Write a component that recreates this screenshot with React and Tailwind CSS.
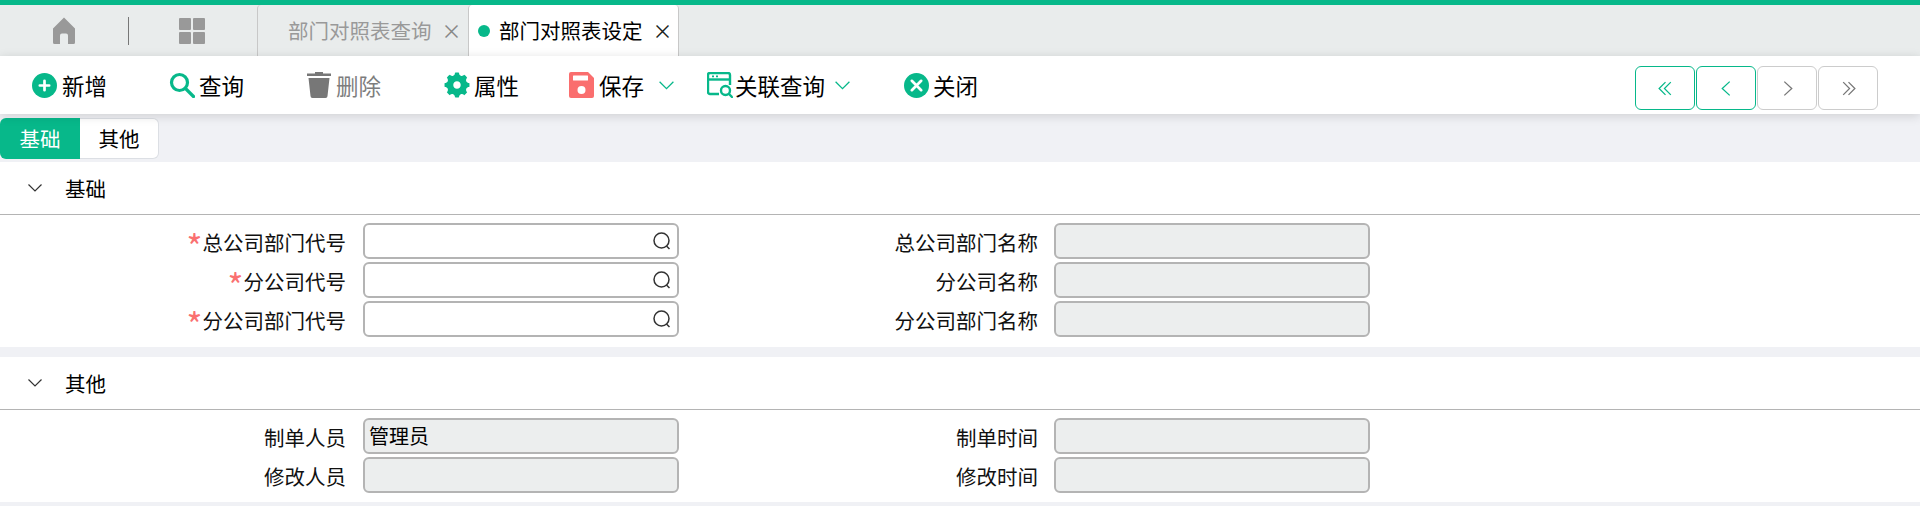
import React from "react";
import { RiSettings5Fill } from "react-icons/ri";

const font = "font-['Noto_Sans_CJK_SC','Noto_Sans',sans-serif]";

const Chevron = ({ className = "", dir = "down" }) => (
  <svg viewBox="0 0 16 16" className={className} fill="none" stroke="currentColor" strokeWidth="1.2">
    {dir === "down" && <path d="M1.5 4.5 8 11l6.5-6.5" />}
    {dir === "left" && <path d="M11 1.5 4 8l7 6.5" />}
    {dir === "right" && <path d="M5 1.5 12 8l-7 6.5" />}
    {dir === "dleft" && <path d="M8 2 2 8l6 6M13 2 7 8l6 6" />}
    {dir === "dright" && <path d="M3 2l6 6-6 6M8 2l6 6-6 6" />}
  </svg>
);

const HomeIcon = () => (
  <svg viewBox="0 0 26 28" className="w-[26px] h-[28px]" fill="#999999">
    <path d="M13 0.5 24 11.5 V25.5 Q24 27 22.5 27 H17 V18.5 Q17 16.5 15 16.5 H11 Q9 16.5 9 18.5 V27 H3.5 Q2 27 2 25.5 V11.5 Z" />
  </svg>
);

const GridIcon = () => (
  <svg viewBox="0 0 26 26" className="w-[26px] h-[26px]" fill="#999999">
    <rect x="0" y="0" width="12" height="12" rx="1" />
    <rect x="14" y="0" width="12" height="12" rx="1" />
    <rect x="0" y="14" width="12" height="12" rx="1" />
    <rect x="14" y="14" width="12" height="12" rx="1" />
  </svg>
);

const PlusIcon = () => (
  <svg viewBox="0 0 24 24" className="w-[25px] h-[25px]">
    <circle cx="12" cy="12" r="12" fill="#07b88a" />
    <path d="M12 7.5v9M7.5 12h9" stroke="#fff" strokeWidth="2.6" strokeLinecap="round" />
  </svg>
);

const SearchIcon = () => (
  <svg viewBox="0 0 26 26" className="w-[26px] h-[26px] -mr-[1px]" fill="none" stroke="#07b88a" strokeWidth="3.2">
    <circle cx="10.5" cy="10.5" r="8" />
    <path d="M16.5 16.5 24.5 24.5" strokeLinecap="round" />
  </svg>
);

const TrashIcon = () => (
  <svg viewBox="0 0 24 26" className="w-[24px] h-[26px]" fill="#777777">
    <path d="M8 0h8v1.5h8V4H0V1.5h8z" />
    <path d="M1.5 6h21l-2 18a2 2 0 0 1-2 2h-13a2 2 0 0 1-2-2z" />
  </svg>
);

const SaveIcon = () => (
  <svg viewBox="0 0 25 26" className="w-[25px] h-[26px]">
    <path d="M2 0h17l6 6v18a2 2 0 0 1-2 2H2a2 2 0 0 1-2-2V2a2 2 0 0 1 2-2z" fill="#fa6e6e" />
    <rect x="4" y="3.5" width="15" height="5" rx="0.5" fill="#fff" />
    <circle cx="12.5" cy="18" r="4" fill="#fff" />
  </svg>
);

const LinkQueryIcon = () => (
  <svg viewBox="0 0 26 26" className="w-[26px] h-[26px] ml-[1px] -mr-[3px]" fill="none" stroke="#07b88a" strokeWidth="2.4">
    <path d="M12 22H3a2 2 0 0 1-2-2V3a2 2 0 0 1 2-2h18a2 2 0 0 1 2 2v10" />
    <path d="M1 7.5h22" />
    <path d="M5 4.3h2M9 4.3h2" strokeWidth="1.8" />
    <circle cx="18.5" cy="18.5" r="4.5" />
    <path d="M22 22l3 3" strokeLinecap="round" />
  </svg>
);

const CloseIcon = () => (
  <svg viewBox="0 0 24 24" className="w-[25px] h-[25px] -mr-[1px]">
    <circle cx="12" cy="12" r="12" fill="#07b88a" />
    <path d="M7.5 7.5l9 9M16.5 7.5l-9 9" stroke="#fff" strokeWidth="2.6" strokeLinecap="round" />
  </svg>
);

const Tool = ({ icon, label, width, gray, chevron }) => (
  <div className={`flex items-center ${width}`}>
    {icon}
    <span className={`ml-[5px] text-[22.5px] leading-none ${gray ? "text-[#7d7d7d]" : "text-black"}`}>{label}</span>
    {chevron && <Chevron className={`${chevron} w-[17px] h-[17px] text-[#07b88a]`} />}
  </div>
);

const PageBtn = ({ dir, active }) => (
  <div
    className={`w-[60px] h-[44px] flex items-center justify-center rounded-[6px] border ${
      active ? "border-[#07b88a] text-[#07b88a]" : "border-[#cccccc] text-[#777777]"
    }`}
  >
    <Chevron dir={dir} className="w-[17px] h-[17px]" />
  </div>
);

const Field = ({ label, required, search, value, disabled, wide }) => (
  <>
    <div className={`${wide ? "w-[359px]" : "w-[346px]"} flex justify-end items-center pt-[3px] text-[20.5px] leading-none text-[#111111]`}>
      {required && <span className="text-[#fa7070] text-[34px] leading-none h-[20px] mt-[-8px]">*</span>}
      {label}
    </div>
    <div
      className={`${wide ? "ml-[16px]" : "ml-[17px]"} w-[316px] h-[36px] rounded-[6px] border-2 border-[#b4b4b4] flex items-center justify-between pl-[4px] pr-[5px] text-[20px] text-black ${
        disabled ? "bg-[#eceeee]" : "bg-white"
      }`}
    >
      <span className="leading-none">{value}</span>
      {search && (
        <svg viewBox="0 0 20 20" className="w-[20px] h-[20px]" fill="none" stroke="#333333" strokeWidth="1.5">
          <circle cx="9.5" cy="9.5" r="7.5" />
          <path d="M14.5 15l3 3" />
        </svg>
      )}
    </div>
  </>
);

const Row = ({ children }) => <div className="flex h-[36px]">{children}</div>;

const Section = ({ title, className, children }) => (
  <section className={`bg-white ${className}`}>
    <div className="h-[53px] flex items-center border-b border-[#b4b4b4] text-[20.5px] text-black">
      <Chevron className="ml-[27px] w-[16px] h-[16px] text-[#333333]" />
      <span className="ml-[22px] leading-none">{title}</span>
    </div>
    <div className="pt-[8px] flex flex-col gap-[3px]">{children}</div>
  </section>
);

export default function App() {
  return (
    <div className={`${font} w-[1920px] h-[506px] bg-[#f0f1f5] overflow-hidden`}>
      <div className="h-[5px] bg-[#07b88a]" />

      {/* tab bar */}
      <div className="h-[51px] bg-[#e9ecec] flex items-stretch">
        <div className="w-[257px] relative flex items-center">
          <div className="ml-[51px]"><HomeIcon /></div>
          <div className="ml-[51px] w-[1px] h-[28px] bg-[#777777]" />
          <div className="ml-[50px]"><GridIcon /></div>
        </div>
        <div className="w-[211px] border-l border-[#c8c8c8] rounded-tl-[4px] flex items-center pl-[30px] text-[20.5px] text-[#999999]">
          <span className="leading-none">部门对照表查询</span>
          <span className="ml-[10px] text-[20px] leading-none text-[#888888]">×</span>
        </div>
        <div className="w-[211px] bg-white border-x border-[#c8c8c8] rounded-t-[4px] flex items-center pl-[9px] text-[20.5px] text-black">
          <span className="w-[12px] h-[12px] rounded-full bg-[#07b88a]" />
          <span className="ml-[9px] leading-none">部门对照表设定</span>
          <span className="ml-[10px] text-[20px] leading-none text-[#222222]">×</span>
        </div>
      </div>

      {/* toolbar */}
      <div className="relative h-[58px] bg-white flex items-center pl-[32px] pr-[42px] shadow-[0_2px_10px_rgba(0,0,0,0.14)]">
        <Tool width="w-[137px]" icon={<PlusIcon />} label="新增" />
        <Tool width="w-[138px]" icon={<SearchIcon />} label="查询" />
        <Tool width="w-[137px]" icon={<TrashIcon />} label="删除" gray />
        <Tool width="w-[125px]" icon={<RiSettings5Fill className="w-[30px] h-[30px] text-[#07b88a] -ml-[2px] -mr-[3px]" />} label="属性" />
        <Tool width="w-[137px]" icon={<SaveIcon />} label="保存" chevron="ml-[14px]" />
        <Tool width="w-[198px]" icon={<LinkQueryIcon />} label="关联查询" chevron="ml-[9px]" />
        <Tool width="w-[80px]" icon={<CloseIcon />} label="关闭" />
        <div className="ml-auto mt-[6px] flex gap-[1px]">
          <PageBtn dir="dleft" active />
          <PageBtn dir="left" active />
          <PageBtn dir="right" />
          <PageBtn dir="dright" />
        </div>
      </div>

      {/* sub tabs */}
      <div className="flex h-[41px] mt-[4px] text-[20.5px]">
        <div className="w-[80px] bg-[#07b88a] text-white rounded-l-[6px] flex items-center justify-center leading-none">基础</div>
        <div className="w-[79px] bg-white border border-l-0 border-[#dcdfe4] text-black rounded-r-[6px] flex items-center justify-center leading-none">其他</div>
      </div>

      <Section title="基础" className="mt-[3px] h-[185px]">
        <Row>
          <Field label="总公司部门代号" required search />
          <Field label="总公司部门名称" disabled wide />
        </Row>
        <Row>
          <Field label="分公司代号" required search />
          <Field label="分公司名称" disabled wide />
        </Row>
        <Row>
          <Field label="分公司部门代号" required search />
          <Field label="分公司部门名称" disabled wide />
        </Row>
      </Section>

      <Section title="其他" className="mt-[10px] h-[145px]">
        <Row>
          <Field label="制单人员" value="管理员" disabled />
          <Field label="制单时间" disabled wide />
        </Row>
        <Row>
          <Field label="修改人员" disabled />
          <Field label="修改时间" disabled wide />
        </Row>
      </Section>
    </div>
  );
}
